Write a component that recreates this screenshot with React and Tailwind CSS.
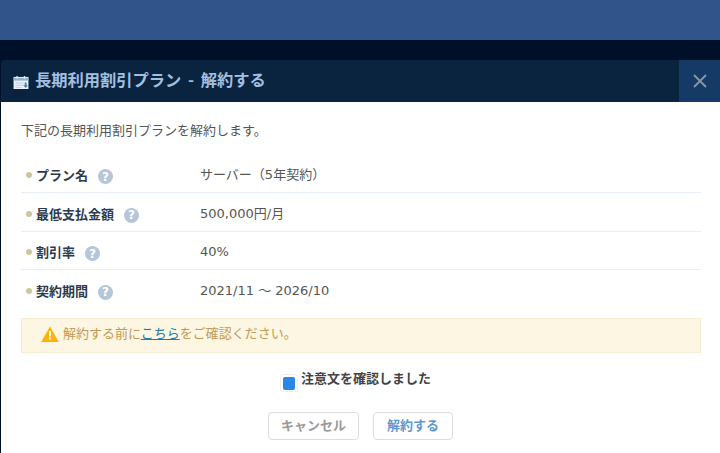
const rows = [
  { label: 'プラン名', value: 'サーバー（5年契約）', h: 'h-[36px] pt-[1px]', border: true },
  { label: '最低支払金額', value: '500,000円/月', h: 'h-[39px] pt-[3px]', border: true },
  { label: '割引率', value: '40%', h: 'h-[38px] pt-[3px]', border: true },
  { label: '契約期間', value: '2021/11 ～ 2026/10', h: 'h-[38px] pt-[3px]', border: false },
]

function HelpBadge() {
  return (
    <span className="ml-[10px] mt-[3px] flex h-[15px] w-[15px] items-center justify-center rounded-full bg-[#b5c6db] text-[12px] font-bold leading-none text-white">
      ?
    </span>
  )
}

function CalendarIcon() {
  return (
    <svg width="16" height="13" viewBox="0 0 16 14" className="mt-[6px]">
      <rect x="0" y="1" width="16" height="13" fill="#eef2f6" />
      <rect x="0" y="2" width="16" height="3" fill="#8fb2cc" />
      <rect x="3" y="0" width="1.500" height="3" fill="#dfe7ee" />
      <rect x="11" y="0" width="1.500" height="3" fill="#dfe7ee" />
      <path d="M2 7h9v1H2zM2 9.500h9v1H2zM2 12h7v1H2z" fill="#bccbd8" />
      <path d="M12 7h2v3h1.500l-2.500 3-2.500-3H12z" fill="#2f86c5" />
    </svg>
  )
}

export default function App() {
  return (
    <div className="flex h-[453px] w-[720px] flex-col overflow-hidden bg-[#001029] font-['DejaVu_Sans','Noto_Sans_CJK_JP',sans-serif] text-[13px] text-[#555]">
      <div className="h-10 shrink-0 bg-[#31548a]" />
      <div className="h-5 shrink-0" />
      <div className="ml-px flex min-h-0 flex-1 flex-col overflow-hidden rounded-tl-[4px]">
        <div className="flex h-[42px] shrink-0 items-center justify-between bg-[#0a2440]">
          <div className="flex items-center pb-[4px] pl-[12px] font-['Noto_Sans_CJK_JP',sans-serif] text-[16.250px] font-bold text-[#a3bfe0] [word-spacing:3px]">
            <CalendarIcon />
            <span className="ml-[6px]">長期利用割引プラン - 解約する</span>
          </div>
          <div className="flex h-full w-[41px] items-center justify-center bg-[#163a66]">
            <svg width="14" height="14" viewBox="0 0 14 14">
              <path d="M1 1l12 12M13 1L1 13" stroke="#8a97a8" strokeWidth="1.800" fill="none" />
            </svg>
          </div>
        </div>

        <div className="flex-1 bg-white pl-[20px] pr-[19px]">
          <p className="mt-[19px] text-[13px] leading-[20px]">下記の長期利用割引プランを解約します。</p>

          <div className="mt-[16px]">
            {rows.map((row) => (
              <div
                key={row.label}
                className={`flex items-center ${row.h} ${row.border ? 'border-b border-[#e8eef5]' : ''}`}
              >
                <div className="flex w-[179px] items-center">
                  <span className="ml-[5px] mr-[4px] h-[6px] w-[6px] rounded-full bg-[#cfc59d]" />
                  <span className="font-['Noto_Sans_CJK_JP',sans-serif] text-[13px] font-bold text-[#2c3a4d]">{row.label}</span>
                  <HelpBadge />
                </div>
                <span>{row.value}</span>
              </div>
            ))}
          </div>

          <div className="mt-[10px] flex h-[35px] items-center border border-[#f8ecd4] bg-[#fcf6e3] pb-[3px] pl-[19px] text-[#c09a55]">
            <svg width="18" height="16" viewBox="0 0 18 16" className="mr-[4px]">
              <path d="M9 0.500L17.800 16H0.200z" fill="#ffb300" />
              <rect x="8" y="5" width="2" height="5.500" fill="#fff" />
              <rect x="8" y="11.500" width="2" height="2" fill="#fff" />
            </svg>
            <span>
              解約する前に<a className="text-[#1a7fa8] underline">こちら</a>をご確認ください。
            </span>
          </div>

          <div className="mt-[15px] flex items-start justify-center pr-[11px]">
            <span className="mt-[6px] flex h-[18px] w-[18px] items-center justify-center rounded-[3px] border border-[#eee] bg-white">
              <span className="h-[13px] w-[12px] rounded-[2px] bg-[#2a87e8]" />
            </span>
            <span className="ml-[3px] font-['Noto_Sans_CJK_JP',sans-serif] text-[13px] font-bold text-[#444]">注意文を確認しました</span>
          </div>

          <div className="mt-[20px] flex justify-center gap-[14px] pr-[1px] font-['Noto_Sans_CJK_JP',sans-serif] text-[13px] font-bold">
            <button className="h-[28px] w-[91px] rounded-[4px] border border-[#ddd] bg-white pb-[2px] text-[#999]">キャンセル</button>
            <button className="h-[28px] w-[80px] rounded-[4px] border border-[#ddd] bg-white pb-[2px] text-[#5d97cf]">解約する</button>
          </div>
        </div>
      </div>
    </div>
  )
}
